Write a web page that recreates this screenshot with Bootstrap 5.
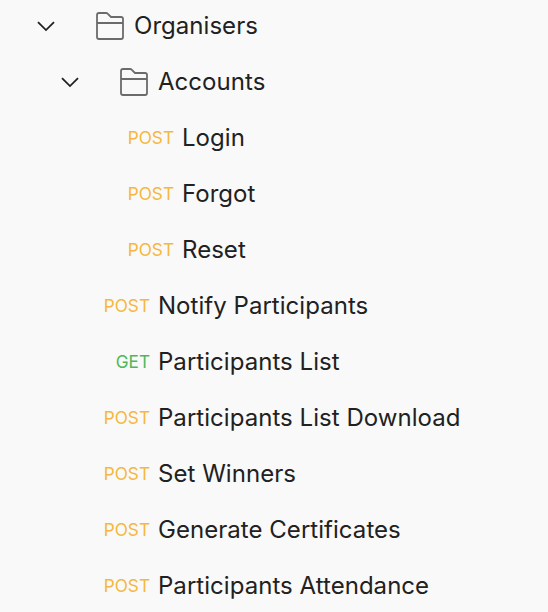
<!DOCTYPE html>
<html lang="en">
<head>
<meta charset="utf-8">
<meta name="viewport" content="width=device-width, initial-scale=1">
<title>Organisers</title>
<link href="https://cdn.jsdelivr.net/npm/bootstrap@5.3.0/dist/css/bootstrap.min.css" rel="stylesheet">
<style>
body{background:#f9f9f9;color:#212121;font-family:Inter,"Liberation Sans",sans-serif;height:612px;overflow:hidden}
.tree{margin-top:-2px}
.tree-item{height:56px;font-size:24px;line-height:56px;letter-spacing:.04px;white-space:nowrap}
.chevron{width:20px;height:20px;margin-right:40px}
.folder{width:28px;height:28px;margin-right:10px}
.level-0{padding-left:36px}
.level-1{padding-left:60px}
.method{width:150px;font-size:17.2px;letter-spacing:0;color:#f5b83d}
.method-get{color:#4fb75a}
.nested .method{width:174px}
</style>
</head>
<body>
<svg class="d-none" aria-hidden="true">
<symbol id="chevron" viewBox="0 0 20 20"><path d="M2 6.2l8 7.9 8-7.9" fill="none" stroke="#212121" stroke-width="1.8"/></symbol>
<symbol id="folder" viewBox="0 0 28 28"><path d="M1 25V3Q1 1 3 1h7.2q.8 0 1.4.6L15 5h10q2 0 2 2v18q0 2-2 2H3q-2 0-2-2zM1 11h26" fill="none" stroke="#6b6b6b" stroke-width="1.8"/></symbol>
</svg>
<ul class="tree list-unstyled mb-0">
<li>
<div class="tree-item level-0 d-flex align-items-center"><svg class="chevron flex-shrink-0"><use href="#chevron"/></svg><svg class="folder flex-shrink-0"><use href="#folder"/></svg><span>Organisers</span></div>
<ul class="list-unstyled mb-0">
<li>
<div class="tree-item level-1 d-flex align-items-center"><svg class="chevron flex-shrink-0"><use href="#chevron"/></svg><svg class="folder flex-shrink-0"><use href="#folder"/></svg><span>Accounts</span></div>
<ul class="nested list-unstyled mb-0">
<li class="tree-item d-flex align-items-center gap-2"><span class="method text-end flex-shrink-0">POST</span><span>Login</span></li>
<li class="tree-item d-flex align-items-center gap-2"><span class="method text-end flex-shrink-0">POST</span><span>Forgot</span></li>
<li class="tree-item d-flex align-items-center gap-2"><span class="method text-end flex-shrink-0">POST</span><span>Reset</span></li>
</ul>
</li>
<li class="tree-item d-flex align-items-center gap-2"><span class="method text-end flex-shrink-0">POST</span><span>Notify Participants</span></li>
<li class="tree-item d-flex align-items-center gap-2"><span class="method method-get text-end flex-shrink-0">GET</span><span>Participants List</span></li>
<li class="tree-item d-flex align-items-center gap-2"><span class="method text-end flex-shrink-0">POST</span><span>Participants List Download</span></li>
<li class="tree-item d-flex align-items-center gap-2"><span class="method text-end flex-shrink-0">POST</span><span>Set Winners</span></li>
<li class="tree-item d-flex align-items-center gap-2"><span class="method text-end flex-shrink-0">POST</span><span>Generate Certificates</span></li>
<li class="tree-item d-flex align-items-center gap-2"><span class="method text-end flex-shrink-0">POST</span><span>Participants Attendance</span></li>
</ul>
</li>
</ul>
<script src="https://cdn.jsdelivr.net/npm/bootstrap@5.3.0/dist/js/bootstrap.bundle.min.js"></script>
</body>
</html>
